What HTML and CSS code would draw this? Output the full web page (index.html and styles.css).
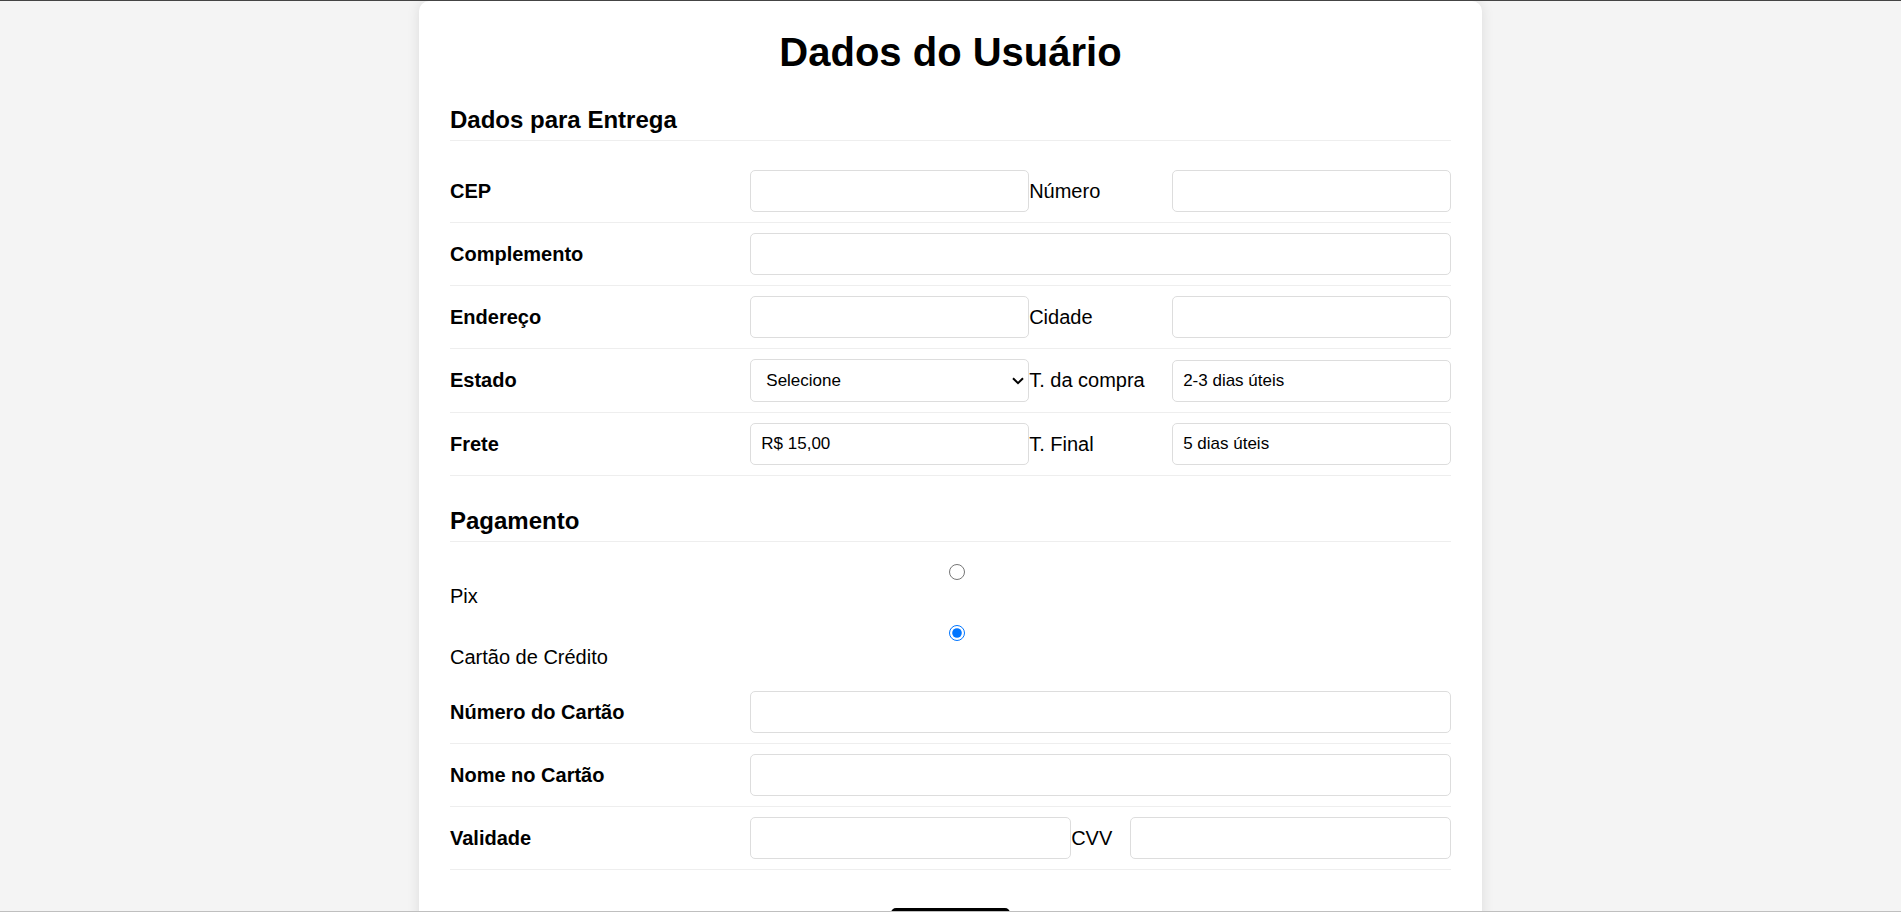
FILE: index.html
```html
<!DOCTYPE html>
<html lang="pt-BR">
<head>
<meta charset="utf-8">
<title>Dados do Usuário</title>
<link rel="stylesheet" href="styles.css">
</head>
<body>
<div class="page">
  <main class="card">
    <h1 class="title">Dados do Usuário</h1>
    <form>
      <h2 class="section-title">Dados para Entrega</h2>
      <div class="row">
        <label class="name" for="cep">CEP</label>
        <div class="fields pair">
          <input class="field" type="text" id="cep">
          <label for="numero">Número</label>
          <input class="field" type="text" id="numero">
        </div>
      </div>
      <div class="row">
        <label class="name" for="complemento">Complemento</label>
        <div class="fields"><input class="field" type="text" id="complemento"></div>
      </div>
      <div class="row">
        <label class="name" for="endereco">Endereço</label>
        <div class="fields pair">
          <input class="field" type="text" id="endereco">
          <label for="cidade">Cidade</label>
          <input class="field" type="text" id="cidade">
        </div>
      </div>
      <div class="row">
        <label class="name" for="estado">Estado</label>
        <div class="fields pair">
          <div class="select-box">
            <select class="field select" id="estado"><option>Selecione</option></select>
            <svg class="chevron" width="12" height="8" viewBox="0 0 12 8" aria-hidden="true"><path d="M1 1.2l5 5 5-5" fill="none" stroke="#000" stroke-width="2"/></svg>
          </div>
          <label for="tempo">T. da compra</label>
          <input class="field" type="text" id="tempo" value="2-3 dias úteis" readonly>
        </div>
      </div>
      <div class="row">
        <label class="name" for="frete">Frete</label>
        <div class="fields pair">
          <input class="field" type="text" id="frete" value="R$ 15,00" readonly>
          <label for="final">T. Final</label>
          <input class="field" type="text" id="final" value="5 dias úteis" readonly>
        </div>
      </div>

      <h2 class="section-title">Pagamento</h2>
      <div class="options">
        <label class="option"><input class="radio" type="radio" name="pagamento">Pix</label>
        <label class="option"><input class="radio" type="radio" name="pagamento" checked>Cartão de Crédito</label>
      </div>
      <div class="row">
        <label class="name" for="cartao">Número do Cartão</label>
        <div class="fields"><input class="field" type="text" id="cartao"></div>
      </div>
      <div class="row">
        <label class="name" for="nome">Nome no Cartão</label>
        <div class="fields"><input class="field" type="text" id="nome"></div>
      </div>
      <div class="row">
        <label class="name" for="validade">Validade</label>
        <div class="fields pair-short">
          <input class="field" type="text" id="validade">
          <label for="cvv">CVV</label>
          <input class="field" type="text" id="cvv">
        </div>
      </div>
      <button class="submit" type="submit" aria-label="Enviar"></button>
    </form>
  </main>
</div>
</body>
</html>
```
FILE: styles.css
```css
* {
  box-sizing: border-box;
}

body {
  margin: 0;
  background: #f4f4f4;
  color: #000;
  font-family: "Liberation Sans", Arial, sans-serif;
  font-size: 20px;
  line-height: 23px;
}

.page {
  height: 100vh;
  overflow: hidden;
  border-top: 1px solid #444;
  border-bottom: 1px solid #bfbfbf;
}

.card {
  max-width: 1063px;
  margin: 0 auto;
  padding: 28px 31px 32px;
  background: #fff;
  border-radius: 10px;
  box-shadow: 0 0 13px rgba(0, 0, 0, 0.1);
}

.title {
  margin: 0;
  font-size: 40px;
  line-height: 46px;
  text-align: center;
}

.section-title {
  margin: 31px 0 19px;
  padding-bottom: 6px;
  border-bottom: 1px solid #eee;
  font-size: 24px;
  line-height: 28px;
}

.row {
  display: grid;
  grid-template-columns: 3fr 7fr;
  align-items: center;
  padding: 10px 0;
  border-bottom: 1px solid #eee;
}

.name {
  font-weight: bold;
}

.fields {
  display: grid;
  align-items: center;
}

.pair {
  grid-template-columns: 1fr 143px 1fr;
}

.pair-short {
  grid-template-columns: 1fr 59px 1fr;
}

.field {
  display: block;
  width: 100%;
  min-width: 0;
  height: 42px;
  padding: 10px;
  border: 1px solid #ddd;
  border-radius: 5px;
  background: #fff;
  color: #000;
  font-family: inherit;
  font-size: 17px;
}

.select-box {
  position: relative;
}

.select {
  height: 43px;
  padding: 0 24px 0 15px;
  appearance: none;
}

.chevron {
  position: absolute;
  top: 18px;
  right: 5px;
  pointer-events: none;
}

.options {
  display: flex;
  flex-direction: column;
  gap: 14px;
  margin-bottom: 12px;
}

.option {
  display: flex;
  flex-direction: column;
}

.radio {
  align-self: center;
  width: 16px;
  height: 16px;
  margin: 3px 0 5px 12px;
}

.submit {
  display: block;
  width: 119px;
  height: 50px;
  margin: 38px auto 0;
  border: 0;
  border-radius: 5px;
  background: #000;
}
```
